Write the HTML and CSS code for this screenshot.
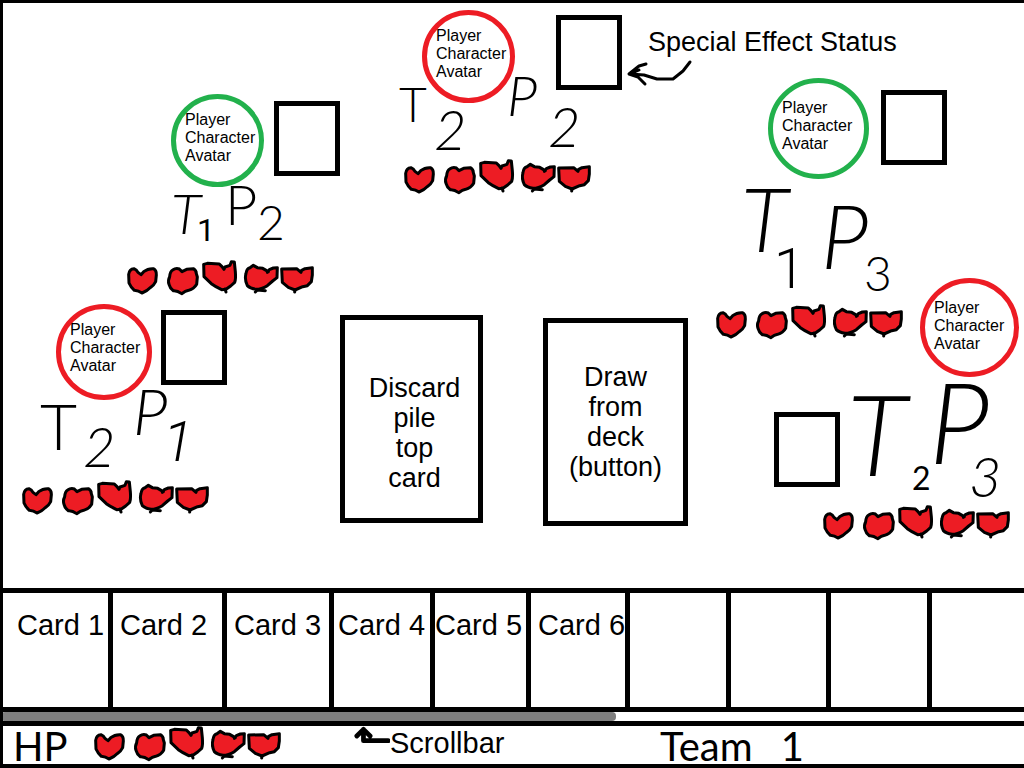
FILE: index.html
```html
<!DOCTYPE html>
<html lang="en">
<head>
<meta charset="utf-8">
<meta name="viewport" content="width=device-width, initial-scale=1">
<title>Card game table</title>
<link rel="stylesheet" href="styles.css">
</head>
<body>
<svg class="defs" aria-hidden="true">
  <symbol id="hearts" viewBox="18 15 570 111">
    <g fill="#ed1c24" stroke="#000" stroke-width="9" stroke-linejoin="round" stroke-linecap="round">
      <path d="M26 58Q28 42 42 41Q50 44 54 52L63 59L71 50Q84 40 100 41Q110 46 109 60L107 80Q101 92 92 97Q82 108 66 114Q56 107 43 106Q32 96 27 84Z"/>
      <path d="M149 65Q150 50 158 45Q168 38 178 42L186 50L200 43L220 41Q229 46 229 56L232 66L230 88Q222 102 206 106Q196 108 185 116Q172 106 160 107Q150 100 147 88Q143 76 149 65Z"/>
      <path d="M251 28L262 25L298 27L306 35L312 43L315 36L330 31L334 20L343 21L346 50Q348 72 344 82L332 93L318 103L305 104Q285 94 274 86L252 65Z"/>
      <path d="M315 102L318 111" fill="none"/>
      <path d="M378 55Q380 40 390 38L400 31L412 38L428 40L445 50L442 52L448 44L460 39L472 38L471 68L458 78L442 92Q424 103 408 103Q390 100 382 92Q373 74 378 55Z"/>
      <path d="M406 111L412 105L436 107" fill="none"/>
      <path d="M485 42L530 41L543 52L545 46L555 41L577 38L577 60L574 80L562 92L548 95L525 105L505 97L487 82Z"/>
      <path d="M525 104L524 111" fill="none"/>
    </g>
  </symbol>
</svg>

<main class="board">
  <div class="zone zone-left">
    <section class="player t1p2" aria-label="Team 1 player 2">
      <div class="avatar ally">Player<br>Character<br>Avatar</div>
      <div class="status"></div>
      <p class="tag"><span class="a">T</span><span class="b plain">1</span><span class="c">P</span><span class="d">2</span></p>
      <svg class="hearts" role="img" aria-label="5 hearts"><use href="#hearts"/></svg>
    </section>
    <section class="player t2p1" aria-label="Team 2 player 1">
      <div class="avatar rival">Player<br>Character<br>Avatar</div>
      <div class="status"></div>
      <p class="tag"><span class="a">T</span><span class="b">2</span><span class="c">P</span><span class="d plain">1</span></p>
      <svg class="hearts" role="img" aria-label="5 hearts"><use href="#hearts"/></svg>
    </section>
  </div>

  <div class="zone zone-center">
    <section class="player t2p2" aria-label="Team 2 player 2">
      <div class="avatar rival">Player<br>Character<br>Avatar</div>
      <div class="status"></div>
      <p class="tag"><span class="a">T</span><span class="b">2</span><span class="c">P</span><span class="d">2</span></p>
      <svg class="hearts" role="img" aria-label="5 hearts"><use href="#hearts"/></svg>
    </section>
    <p class="note">Special Effect Status</p>
    <svg class="note-arrow" viewBox="0 0 68 30" aria-hidden="true">
      <path d="M65 4L58 13L48 21L32 21L19 17L5 16M21 6L14 8L4 16L13 19L20 26M5 16L14 12" fill="none" stroke="#000" stroke-width="3" stroke-linecap="round" stroke-linejoin="round"/>
    </svg>
    <div class="piles">
      <div class="pile discard">Discard<br>pile<br>top<br>card</div>
      <button class="pile draw" type="button">Draw<br>from<br>deck<br>(button)</button>
    </div>
  </div>

  <div class="zone zone-right">
    <section class="player t1p3" aria-label="Team 1 player 3">
      <div class="avatar ally">Player<br>Character<br>Avatar</div>
      <div class="status"></div>
      <p class="tag"><span class="a">T</span><span class="b plain">1</span><span class="c">P</span><span class="d">3</span></p>
      <svg class="hearts" role="img" aria-label="5 hearts"><use href="#hearts"/></svg>
    </section>
    <section class="player t2p3" aria-label="Team 2 player 3">
      <div class="avatar rival">Player<br>Character<br>Avatar</div>
      <div class="status"></div>
      <p class="tag"><span class="a">T</span><span class="b">2</span><span class="c">P</span><span class="d">3</span></p>
      <svg class="hearts" role="img" aria-label="5 hearts"><use href="#hearts"/></svg>
    </section>
  </div>
</main>

<section class="hand" aria-label="Your hand">
  <button class="card deep" type="button">Card 1</button>
  <button class="card" type="button">Card 2</button>
  <button class="card" type="button">Card 3</button>
  <button class="card near" type="button">Card 4</button>
  <button class="card flush" type="button">Card 5</button>
  <button class="card" type="button">Card 6</button>
  <div class="card"></div>
  <div class="card"></div>
  <div class="card"></div>
  <div class="card"></div>
</section>
<div class="track"><div class="thumb"></div></div>

<footer class="footer">
  <div class="own">
    <span class="hp">HP</span>
    <svg class="hearts" role="img" aria-label="5 hearts"><use href="#hearts"/></svg>
  </div>
  <div class="hint">
    <svg class="hint-arrow" viewBox="0 0 38 20" aria-hidden="true">
      <path d="M36 15H10V3M3 10L10 3L17 10" fill="none" stroke="#000" stroke-width="5" stroke-linecap="round" stroke-linejoin="round"/>
    </svg>
    <span>Scrollbar</span>
  </div>
  <div class="team"><span>Team</span><span>1</span></div>
</footer>
</body>
</html>
```

FILE: styles.css
```css
* { box-sizing: border-box; }

body {
  margin: 0;
  min-height: 100vh;
  display: flex;
  flex-direction: column;
  border: solid #000;
  border-width: 3px 0 4px 3px;
  background: #fff;
  color: #000;
  font-family: "Liberation Sans", Arial, sans-serif;
  overflow-x: hidden;
}

p { margin: 0; }

button {
  font: inherit;
  color: inherit;
  background: none;
  border-radius: 0;
  cursor: pointer;
}

.defs { position: absolute; width: 0; height: 0; }

/* Table: three zones, seats are placed freely inside each */
.board {
  flex: 1;
  min-height: 585px;
  display: grid;
  grid-template-columns: 337px 1fr 311px;
}

.zone { position: relative; }
.zone-center { width: 373px; justify-self: center; }

.avatar, .status, .tag span, .player .hearts, .note, .note-arrow { position: absolute; }

.avatar {
  padding: 12px 0 0 9px;
  border: 5px solid;
  border-radius: 50%;
  font-size: 16px;
  line-height: 18px;
  white-space: nowrap;
}
.avatar.ally { border-color: #22b14c; }
.avatar.rival { border-color: #ed1c24; }

.status { width: 66px; height: 75px; border: 5px solid #000; }

.hearts { width: 190px; height: 37px; overflow: visible; }

.tag, .hp, .team {
  font-family: Lato, "Liberation Sans", sans-serif;
  line-height: 1;
}
.tag { font-weight: 300; }
.tag .plain { font-family: Roboto, "Liberation Sans", sans-serif; }

.t1p2 .avatar { left: 168px; top: 91px; width: 93px; height: 93px; }
.t1p2 .status { left: 271px; top: 98px; }
.t1p2 .a { left: 168px; top: 182px; font-size: 56px; font-style: italic; }
.t1p2 .b { left: 194px; top: 211px; font-size: 32px; font-weight: 400; }
.t1p2 .c { left: 222px; top: 173px; font-size: 56px; }
.t1p2 .d { left: 254px; top: 195px; font-size: 48px; }
.t1p2 .hearts { left: 123px; top: 257px; }

.t2p1 .avatar { left: 53px; top: 301px; width: 96px; height: 96px; }
.t2p1 .status { left: 158px; top: 307px; }
.t2p1 .a { left: 37px; top: 391px; font-size: 64px; }
.t2p1 .b { left: 80px; top: 415px; font-size: 56px; font-style: italic; }
.t2p1 .c { left: 130px; top: 376px; font-size: 64px; font-style: italic; }
.t2p1 .d { left: 160px; top: 411px; font-size: 56px; font-style: italic; }
.t2p1 .hearts { left: 18px; top: 477px; }

.t2p2 .avatar { left: 82px; top: 7px; width: 93px; height: 93px; }
.t2p2 .status { left: 216px; top: 12px; }
.t2p2 .a { left: 59px; top: 77px; font-size: 48px; }
.t2p2 .b { left: 94px; top: 98px; font-size: 56px; font-style: italic; }
.t2p2 .c { left: 167px; top: 64px; font-size: 56px; font-style: italic; }
.t2p2 .d { left: 208px; top: 95px; font-size: 56px; font-style: italic; }
.t2p2 .hearts { left: 63px; top: 156px; }

.t1p3 .avatar { left: 55px; top: 75px; width: 101px; height: 101px; padding-top: 16px; }
.t1p3 .status { left: 168px; top: 87px; }
.t1p3 .a { left: 28px; top: 171px; font-size: 88px; font-style: italic; }
.t1p3 .b { left: 61px; top: 238px; font-size: 56px; }
.t1p3 .c { left: 108px; top: 188px; font-size: 88px; font-style: italic; }
.t1p3 .d { left: 151px; top: 246px; font-size: 48px; }
.t1p3 .hearts { left: 2px; top: 301px; }

.t2p3 .avatar { left: 207px; top: 275px; width: 99px; height: 99px; padding-top: 16px; }
.t2p3 .status { left: 61px; top: 409px; }
.t2p3 .a { left: 134px; top: 374px; font-size: 112px; font-style: italic; }
.t2p3 .b { left: 199px; top: 459px; font-size: 32px; font-weight: 400; }
.t2p3 .c { left: 216px; top: 362px; font-size: 112px; font-style: italic; }
.t2p3 .d { left: 256px; top: 445px; font-size: 56px; font-style: italic; }
.t2p3 .hearts { left: 109px; top: 502px; }

.note { left: 308px; top: 24px; font-size: 27px; line-height: 30px; white-space: nowrap; }
.note-arrow { left: 285px; top: 55px; width: 68px; height: 30px; }

.piles {
  display: flex;
  align-items: flex-start;
  gap: 60px;
  padding-top: 312px;
}
.pile {
  height: 208px;
  display: flex;
  align-items: center;
  justify-content: center;
  border: 5px solid #000;
  font-size: 27px;
  line-height: 30px;
  text-align: center;
}
.discard { width: 143px; padding: 28px 0 0 6px; }
.draw { width: 145px; margin-top: 3px; padding: 0; }

/* Hand */
.hand {
  display: grid;
  grid-template-columns: 110fr 114fr 107fr 101fr 96fr 99fr 101fr 100fr 101fr 92fr;
  border: solid #000;
  border-width: 5px 0;
}
.card {
  min-width: 0;
  min-height: 114px;
  display: flex;
  align-items: flex-start;
  padding: 15px 0 0 7px;
  border: 0 solid #000;
  border-right-width: 5px;
  font-size: 29px;
  line-height: 34px;
  white-space: nowrap;
}
.card:last-child { border-right: 0; }
.card.deep { padding-left: 14px; }
.card.near { padding-left: 4px; }
.card.flush { padding-left: 0; }

.track { height: 14px; border-bottom: 5px solid #000; }
.thumb {
  width: calc(60% + 2px);
  height: 9px;
  margin-left: -2px;
  border-radius: 4px;
  background: #7f7f7f;
}

/* Footer */
.footer {
  height: 38px;
  display: grid;
  grid-template-columns: 351fr 306fr 364fr;
  font-size: 29px;
  line-height: 34px;
}
.own, .hint, .team { display: flex; align-items: flex-start; }
.own { gap: 20px; padding-left: 10px; }
.hp { width: 60px; font-size: 40px; }
.hint-arrow { width: 36px; height: 20px; }
.team { gap: 28px; font-size: 40px; }
```
